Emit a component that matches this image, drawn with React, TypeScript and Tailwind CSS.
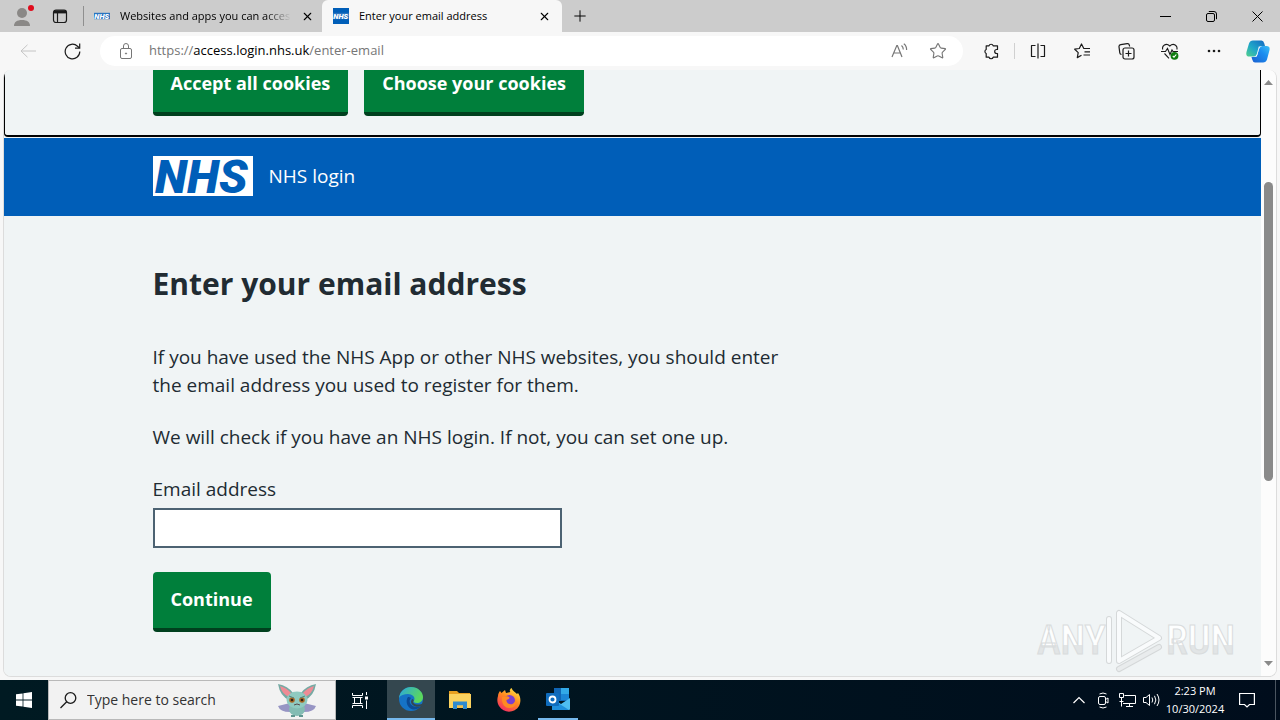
import type { ReactNode } from "react";
import { LuStar, LuX, LuPlus } from "react-icons/lu";
import clsx from "clsx";

type IconButtonProps = {
  label: string;
  className?: string;
  children: ReactNode;
};

const IconButton = ({ label, className, children }: IconButtonProps) => (
  <button
    aria-label={label}
    className={clsx("flex items-center justify-center shrink-0", className)}
  >
    {children}
  </button>
);

type NhsLogoProps = {
  className?: string;
  inverted?: boolean;
};

const NhsLogo = ({ className, inverted }: NhsLogoProps) => (
  <svg
    viewBox="0 0 100 40"
    className={clsx("overflow-visible", className)}
    role="img"
    aria-label="NHS"
  >
    <rect width="100" height="40" fill={inverted ? "#2a74bf" : "#fff"} />
    <text
      x="2"
      y="37"
      fontFamily="Roboto, sans-serif"
      fontWeight="900"
      fontStyle="italic"
      fontSize="47"
      fill={inverted ? "#fff" : "#005eb8"}
    >
      NHS
    </text>
  </svg>
);

const ProfileIcon = () => (
  <svg width="24" height="24" viewBox="0 0 24 24">
    <circle cx="12" cy="9" r="5" fill="#8a8886" />
    <path d="M4 22c0-4 3-6 8-6s8 2 8 6z" fill="#8a8886" />
    <circle cx="21" cy="4" r="3" fill="#e00b1c" />
  </svg>
);

const WorkspacesIcon = () => (
  <svg width="16" height="16" viewBox="0 0 16 16" fill="none" stroke="#1b1b1b">
    <rect x="1.5" y="2" width="13" height="12.5" rx="2.5" strokeWidth="1.2" />
    <path d="M2 3.8h12" strokeWidth="3.2" />
    <path d="M5.5 4v10" strokeWidth="1.2" />
  </svg>
);

const TabStrip = () => (
  <div className="flex items-end h-8 shrink-0 bg-[#cccccc] text-[11px] text-black">
    <div className="flex items-center h-full flex-1 min-w-0">
      <IconButton label="Profile" className="w-11 h-full">
        <ProfileIcon />
      </IconButton>
      <IconButton label="Workspaces" className="w-8 h-full">
        <WorkspacesIcon />
      </IconButton>
      <div className="w-px h-5 ml-[7px] bg-[#8f8f8f]" />
      <div className="flex items-center w-[238px] h-full shrink-0 pl-[10px] pr-2 gap-[10px]">
        <NhsLogo inverted className="w-4 h-2" />
        <span className="flex-1 overflow-hidden whitespace-nowrap [mask-image:linear-gradient(to_right,black_85%,transparent)]">
          Websites and apps you can acces
        </span>
        <IconButton label="Close tab">
          <LuX size={13} />
        </IconButton>
      </div>
      <div className="flex items-center w-60 h-full shrink-0 px-[11px] gap-[10px] rounded-t-md bg-[#f7f7f7]">
        <span className="flex items-center w-4 h-4 bg-[#005eb8]">
          <NhsLogo inverted className="w-4 h-2" />
        </span>
        <span className="flex-1 whitespace-nowrap">Enter your email address</span>
        <IconButton label="Close tab">
          <LuX size={13} />
        </IconButton>
      </div>
      <IconButton label="New tab" className="w-9 h-full">
        <LuPlus size={18} strokeWidth={1.3} />
      </IconButton>
    </div>
    <div className="flex h-full">
      <IconButton label="Minimize" className="w-[46px]">
        <svg width="11" height="11" stroke="#000" fill="none">
          <path d="M0 5.5h11" />
        </svg>
      </IconButton>
      <IconButton label="Restore" className="w-[46px]">
        <svg width="11" height="11" stroke="#000" fill="none">
          <rect x=".5" y="2.5" width="8" height="8" rx="1.5" />
          <path d="M2.8.5H8a2.5 2.5 0 0 1 2.5 2.5v5.2" />
        </svg>
      </IconButton>
      <IconButton label="Close" className="w-[46px]">
        <svg width="11" height="11" stroke="#000" fill="none">
          <path d="M.5.5l10 10M10.5.5l-10 10" />
        </svg>
      </IconButton>
    </div>
  </div>
);

const Toolbar = () => (
  <div className="flex items-center h-[38px] shrink-0 bg-[#f7f7f7]">
    <IconButton label="Back" className="w-14 text-[#c4c4c4]">
      <svg width="16" height="14" stroke="currentColor" fill="none">
        <path d="M16 7H1M7.5.8L1 7l6.5 6.2" />
      </svg>
    </IconButton>
    <IconButton label="Refresh" className="w-8">
      <svg width="17" height="17" viewBox="0 0 17 17" stroke="#1b1b1b" fill="none" strokeWidth="1.2">
        <path d="M15.8 8.5A7.3 7.3 0 1 1 13.5 3.2L15.5 5" />
        <path d="M15.7.5v4.700h-4.700" />
      </svg>
    </IconButton>
    <div className="flex items-center flex-1 h-[30px] ml-3 pl-[18px] pr-4 rounded-full bg-white">
      <svg width="16" height="18" viewBox="0 0 16 18" stroke="#767676" fill="none" aria-hidden="true">
        <rect x="2.5" y="6.500" width="11" height="10" rx="1.5" />
        <path d="M5.500 6.500V4a2.500 2.500 0 0 1 5 0v2.500" />
        <circle cx="8" cy="11.500" r=".6" fill="#767676" />
      </svg>
      <div className="flex-1 ml-[15px] text-[13px] text-[#767676]">
        https://<span className="text-black">access.login.nhs.uk</span>/enter-email
      </div>
      <IconButton label="Read aloud" className="w-10 text-[#767676]">
        <svg width="17" height="16" viewBox="0 0 17 16" stroke="currentColor" fill="none" strokeWidth="1.2">
          <path d="M1 14L5.800 2.500h.6L11 14M2.700 10h6.600" />
          <path d="M10.500 2.500q1.800 1.400 1.800 4M12.800.8q3 2.200 2.800 6.200" />
        </svg>
      </IconButton>
      <IconButton label="Add to favorites" className="w-[38px] -mr-[10px] text-[#767676]">
        <LuStar size={18} strokeWidth={1.5} />
      </IconButton>
    </div>
    <IconButton label="Extensions" className="w-11 ml-[6px]">
      <svg width="17" height="17" viewBox="0 0 17 17" stroke="#1b1b1b" fill="none" strokeWidth="1.2">
        <path d="M6 2.800a2.200 2.200 0 0 1 4.200 0H14.500v3.700h-.8a2 2 0 0 0 0 4h.8v3.700h-4.300a2.200 2.200 0 0 1-4.200 0H3.200v-3.700a2.200 2.200 0 0 1 0-4V2.800z" strokeLinejoin="round" />
      </svg>
    </IconButton>
    <div className="w-px h-4 mx-px bg-[#d0d0d0]" />
    <IconButton label="Split screen" className="w-11">
      <svg width="16" height="16" stroke="#1b1b1b" fill="none" strokeWidth="1.2">
        <path d="M8 .5v15M5.500 2.500h-4v11h4M10.500 2.500h4v11h-4" strokeLinejoin="round" />
      </svg>
    </IconButton>
    <IconButton label="Favorites" className="w-11">
      <svg width="17" height="16" viewBox="0 0 17 16" stroke="#1b1b1b" fill="none" strokeWidth="1.2" strokeLinejoin="round">
        <path d="M14.500 5.500H9.800L7.500 1 5.300 5.500.7 6.200l3.500 3.400-.9 5 4.200-2.300" />
        <path d="M10.500 5.500H16M10.500 8.800H16M9.500 12H16" />
      </svg>
    </IconButton>
    <IconButton label="Collections" className="w-11">
      <svg width="17" height="17" viewBox="0 0 17 17" stroke="#1b1b1b" fill="none" strokeWidth="1.2">
        <path d="M3.500 11.500a2 2 0 0 1-1.700-1.700L1 3.800A2 2 0 0 1 2.700 1.600l6.500-.9a2 2 0 0 1 2.200 1.600l.2 1.200" />
        <rect x="5" y="5" width="11" height="11" rx="2" />
        <path d="M10.500 7.500v6M7.500 10.500h6" />
      </svg>
    </IconButton>
    <IconButton label="Browser essentials" className="w-11">
      <svg width="18" height="17" viewBox="0 0 18 17" stroke="#1b1b1b" fill="none" strokeWidth="1.1">
        <path d="M1.800 6.500C.5 2.800 5-.7 8.800 3c3.800-3.700 8.200-.2 7 3.500M3.500 10.500l4.500 4.800" />
        <path d="M0 8.500h4.500l2-3 2.500 6 2-4.500 1 1.500H17" />
        <circle cx="13.500" cy="12.800" r="3.900" fill="#107c10" stroke="none" />
        <path d="M11.800 13l1.200 1.200 2.300-2.700" stroke="#fff" />
      </svg>
    </IconButton>
    <IconButton label="Settings and more" className="w-11">
      <svg width="14" height="4" fill="#1b1b1b">
        <circle cx="2" cy="2" r="1.300" />
        <circle cx="7" cy="2" r="1.300" />
        <circle cx="12" cy="2" r="1.300" />
      </svg>
    </IconButton>
    <IconButton label="Copilot" className="w-11">
      <svg width="24" height="23" viewBox="0 0 24 23">
        <defs>
          <linearGradient id="copilotLeft" x1="0" y1="1" x2="1" y2="0">
            <stop offset="0" stopColor="#52d08c" />
            <stop offset=".45" stopColor="#1fa7c9" />
            <stop offset="1" stopColor="#1467c2" />
          </linearGradient>
          <linearGradient id="copilotRight" x1="0" y1="1" x2="1" y2="0">
            <stop offset="0" stopColor="#1b5fd0" />
            <stop offset=".6" stopColor="#1a8df0" />
            <stop offset="1" stopColor="#3cc0f5" />
          </linearGradient>
        </defs>
        <path d="M7 .5h8.500q2 0 2.800 3l.7 2.500h-3q-2.300 0-3 2.500l-1.500 5q-.9 3-3.500 3H3.500Q-.8 16.500.6 11.500L3 3.500Q4 .5 7 .5z" fill="url(#copilotLeft)" />
        <path d="M17 22.500H9q-2 0-2.800-3l-.7-2.500H8.500q2.300 0 3-2.500l1.500-5.500q.9-3 3.500-3h4q4 0 2.900 4.500L21 19.500q-1 3-4 3z" fill="url(#copilotRight)" />
        <path d="M12.800 6.500h3.200q-2.300 0-3 2.500l-2.200 7.500H8.200q2-.5 2.600-2.500z" fill="#f4fbff" />
      </svg>
    </IconButton>
  </div>
);

const GreenButton = ({ className, children }: { className?: string; children: ReactNode }) => (
  <button
    className={clsx(
      "px-[18px] rounded bg-[#007f3b] border-b-4 border-[#00401e] text-white text-lg leading-[26px] font-bold",
      className
    )}
  >
    {children}
  </button>
);

const Page = () => (
  <div className="flex-1 min-w-0 overflow-hidden bg-[#f0f4f5] text-[#212b32] text-[19px] leading-7">
    <div className="border-b-2 border-x border-black rounded-b-sm mb-px pb-[19px]">
      <div className="flex gap-4 max-w-[960px] mx-auto">
        <GreenButton className="rounded-t-none pb-4">Accept all cookies</GreenButton>
        <GreenButton className="rounded-t-none pb-4">Choose your cookies</GreenButton>
      </div>
    </div>
    <header className="bg-[#005eb8] pt-[18px] pb-5">
      <a href="#" className="flex items-center gap-4 max-w-[960px] mx-auto text-white">
        <NhsLogo className="w-[100px] h-10" />
        <span>NHS login</span>
      </a>
    </header>
    <main className="max-w-[960px] mx-auto pt-12">
      <h1 className="text-[30px] leading-10 font-bold mb-[39px]">Enter your email address</h1>
      <p className="mb-6 max-w-[640px]">
        If you have used the NHS App or other NHS websites, you should enter the email address you
        used to register for them.
      </p>
      <p className="mb-6">
        We will check if you have an NHS login. If not, you can set one up.
      </p>
      <label htmlFor="email" className="block mb-[5px]">
        Email address
      </label>
      <input
        id="email"
        type="email"
        className="block w-full max-w-[409px] h-10 mb-6 px-1 bg-white border-2 border-[#4c6272]"
      />
      <GreenButton className="pt-[14px] pb-4">Continue</GreenButton>
    </main>
  </div>
);

const ScrollBar = () => (
  <div className="flex flex-col items-center w-[15px] shrink-0 bg-[#fcfcfc] py-[10px]" aria-hidden="true">
    <svg width="9" height="5" fill="#8a8a8a">
      <path d="M0 5l4.500-5L9 5z" />
    </svg>
    <div className="flex-[97]" />
    <div className="flex-[300] w-[9px] rounded-full bg-[#8a8a8a]" />
    <div className="flex-[180]" />
    <svg width="9" height="5" fill="#8a8a8a">
      <path d="M0 0l4.500 5L9 0z" />
    </svg>
  </div>
);

const Watermark = () => (
  <svg
    width="200"
    height="66"
    viewBox="0 0 200 66"
    className="absolute right-[41px] bottom-[3px] pointer-events-none"
    aria-hidden="true"
  >
    <defs>
      <linearGradient id="mark" x1="0" y1="0" x2="0" y2="1">
        <stop offset=".6" stopColor="#fdfefe" />
        <stop offset=".6" stopColor="#e2e5e6" />
      </linearGradient>
    </defs>
    <g
      fill="url(#mark)"
      stroke="#d9dcdd"
      strokeWidth="1"
      fontFamily="Roboto Condensed, Liberation Sans Narrow, sans-serif"
      fontSize="40"
      fontWeight="500"
    >
      <text x="2" y="47">ANY</text>
      <text x="131" y="47">RUN</text>
    </g>
    <g fill="none" strokeLinejoin="round" strokeLinecap="round">
      <path d="M74 12v42M84 6v48l40-23zM84 62l40-22" stroke="#d5d8d9" strokeWidth="6" />
      <path d="M74 12v42M84 6v48l40-23z" stroke="#f9fbfc" strokeWidth="4" />
      <path d="M84 62l40-22" stroke="#e9eced" strokeWidth="4" />
    </g>
  </svg>
);

const SearchHighlight = () => (
  <svg width="40" height="34" viewBox="0 0 40 34" aria-hidden="true">
    <path d="M13 20L1 23q2 6 12 6zM27 20l12 3q-2 6-12 6z" fill="#9795c4" />
    <path d="M12 17Q3 13 1 1q10 2 15 9zM28 17Q37 13 39 1 29 3 24 10z" fill="#76aaa4" />
    <path d="M12 14Q5 11 3 3q7 2 11 7zM28 14Q35 11 37 3q-7 2-11 7z" fill="#ee8b95" />
    <ellipse cx="20" cy="26" rx="8" ry="7" fill="#83bcb3" />
    <ellipse cx="20" cy="17" rx="10.500" ry="8.500" fill="#8fcac0" />
    <circle cx="15" cy="17" r="2.800" fill="#a96824" />
    <circle cx="25" cy="17" r="2.800" fill="#a96824" />
    <circle cx="15" cy="17" r="1.300" fill="#2c2119" />
    <circle cx="25" cy="17" r="1.300" fill="#2c2119" />
    <path d="M12 13l5 2M28 13l-5 2" stroke="#55867f" />
    <path d="M17 22q3-2 6 0" stroke="#5a4a4a" fill="none" />
    <path d="M14 33h4M22 33h4" stroke="#5f958f" strokeWidth="2" />
  </svg>
);

const EdgeIcon = () => (
  <svg width="24" height="24" viewBox="0 0 24 24">
    <defs>
      <linearGradient id="edgeTop" x1="0" y1="0" x2="1" y2=".4">
        <stop offset="0" stopColor="#2aa7e0" />
        <stop offset="1" stopColor="#5bd85c" />
      </linearGradient>
    </defs>
    <circle cx="12" cy="12" r="12" fill="#1673c6" />
    <path d="M0 11C1 4 6 0 12 0c7 0 12 5 12 10 0 4-3 6-6 6-3 0-4-1-3-2.500C17 10 13 7 9 7c-4 0-7.500 1-9 4z" fill="url(#edgeTop)" />
    <path d="M9 10c-3 4-1 11 5 12.500 3 .5 6-1 8.500-3.500-4 2-9 1-11-2-1.500-2.500-1-4.500.5-6-1-1-2-1-3-1z" fill="#0c4a94" />
    <path d="M14.500 14c-1.200 1.500.5 3.500 4.500 3.500 2 0 4-.5 5-1.500l-1.500 3c-4 2-10 0-10.500-4 0-1.500.7-2.500 1.500-3 1 .5 1.500 1.200 1 2z" fill="#34474f" />
  </svg>
);

const ExplorerIcon = () => (
  <svg width="22" height="20" viewBox="0 0 22 20">
    <path d="M0 1h8l2 2h11v5H0z" fill="#e8a020" />
    <path d="M0 4h22v14H0z" fill="#fbd25f" />
    <path d="M4 11.500h14V19h-4v-3.500H8V19H4z" fill="#2e8ad0" />
    <path d="M8 15.500h6V18H8z" fill="#f3c04f" />
  </svg>
);

const FirefoxIcon = () => (
  <svg width="24" height="24" viewBox="0 0 24 24">
    <defs>
      <linearGradient id="fox" x1=".8" y1="0" x2=".2" y2="1">
        <stop offset="0" stopColor="#ffe545" />
        <stop offset=".45" stopColor="#ff8a1f" />
        <stop offset="1" stopColor="#f52667" />
      </linearGradient>
    </defs>
    <path d="M1 8c0-2 1-4 2-5l1.500 2L8 2l1 3c2-.5 4-1 4.500-1C12 3 13 1 14.500 0c1 3 4 4 5.500 6l1-1c3 4 3 9 1 13-4 7-15 8-20 0-2-3-2-7-1-10z" fill="url(#fox)" />
    <circle cx="12.500" cy="12.500" r="5.500" fill="#7a3fd0" />
    <path d="M5 9c3-1 6-1 7 0 1.500 1-.5 2.500-2.500 3-.5 3 3 5 6 4 2-1 3-3 3-5 2 5-1 9-6 9s-8-4-7.500-11z" fill="#ff8a22" />
  </svg>
);

const OutlookIcon = () => (
  <svg width="25" height="24" viewBox="0 0 25 24">
    <path d="M8 1h15v13H8z" fill="#1066b5" />
    <path d="M15 1h8v6h-8z" fill="#32a9e7" />
    <path d="M15 7h8v6h-8z" fill="#1b86d6" />
    <path d="M6 11l9 6 9-6v11q0 1-1 1H7q-1 0-1-1z" fill="#4fbdf0" />
    <path d="M6 12l17 11H7q-1 0-1-1z" fill="#1f8fdc" />
    <rect y="6" width="13" height="13" rx="1" fill="#0f6cbd" />
    <circle cx="6.500" cy="12.500" r="3" fill="none" stroke="#fff" strokeWidth="1.800" />
  </svg>
);

const Taskbar = () => (
  <footer className="flex h-10 shrink-0 bg-linear-to-r from-[#001a22] to-[#000d1c] text-white">
    <IconButton label="Start" className="w-12">
      <svg width="16" height="16" fill="#fff">
        <path d="M0 2.300L6.600 1.400V7.600H0zM7.400 1.300L16 0v7.600H7.400zM0 8.400h6.600v6.200L0 13.700zM7.400 8.400H16V16l-8.600-1.300z" />
      </svg>
    </IconButton>
    <label className="flex items-center w-72 pl-[11px] pr-[18px] bg-[#f2f2f2] border border-[#b9b9b9]">
      <svg width="17" height="17" viewBox="0 0 17 17" stroke="#1b1b1b" fill="none" strokeWidth="1.300" aria-hidden="true">
        <circle cx="10.500" cy="6" r="5.300" />
        <path d="M6.700 9.800L.5 16" />
      </svg>
      <input
        type="text"
        aria-label="Search"
        placeholder="Type here to search"
        className="flex-1 min-w-0 ml-[10px] text-sm placeholder:text-[#333333] bg-transparent"
      />
      <SearchHighlight />
    </label>
    <IconButton label="Task view" className="w-12 mr-[3px]">
      <svg width="17" height="17" viewBox="0 0 17 17" stroke="#fff" fill="none">
        <path d="M.5 1v2.500h10V1M.5 16v-2.500h10V16M2.500 5.500v6M8.500 5.500v6M.5 5.500h10M.5 11.500h10M14.500 0v3M14.500 8.500V17" />
        <path d="M13 4.500h3v3h-3z" fill="#fff" stroke="none" />
      </svg>
    </IconButton>
    <div className="flex gap-px">
      <IconButton label="Microsoft Edge" className="w-12 bg-[#34474f] border-b-2 border-[#76b9ed]">
        <EdgeIcon />
      </IconButton>
      <IconButton label="File Explorer" className="w-12">
        <ExplorerIcon />
      </IconButton>
      <IconButton label="Firefox" className="w-12">
        <FirefoxIcon />
      </IconButton>
      <IconButton label="Outlook" className="w-10 mx-1 border-b-2 border-[#76b9ed]">
        <OutlookIcon />
      </IconButton>
    </div>
    <div className="flex flex-1 justify-end">
      <IconButton label="Show hidden icons" className="w-6">
        <svg width="12" height="8" stroke="#fff" fill="none" strokeWidth="1.200">
          <path d="M.5 7L6 1.500 11.500 7" />
        </svg>
      </IconButton>
      <IconButton label="Camera" className="w-6">
        <svg width="13" height="17" viewBox="0 0 13 17" stroke="#fff" fill="none">
          <rect x="1.500" y="4.500" width="7" height="8" rx="1.500" />
          <path d="M8.500 7.500l2.500-1.500v5l-2.500-1.500M2.500 2Q6 0 9.500 2M2.500 15Q6 17 9.500 15" />
        </svg>
      </IconButton>
      <IconButton label="Network" className="w-6">
        <svg width="17" height="14" viewBox="0 0 17 14" stroke="#fff" fill="none">
          <path d="M5.500 2.500h11v8H4M10.500 10.500v3M7 13.500h7" />
          <path d="M.5.5h4v4h-4zM2.500 4.500v9M.5 8.500h4" />
        </svg>
      </IconButton>
      <IconButton label="Volume" className="w-6">
        <svg width="17" height="14" viewBox="0 0 17 14" stroke="#fff" fill="none">
          <path d="M.5 4.500h2.500l3.500-3v11l-3.500-3H.5zM9 4.500q1.500 2.500 0 5M11.500 2.800q2.700 4.200 0 8.400M14 1q4 6 0 12" />
        </svg>
      </IconButton>
      <button className="w-16 text-[11px] leading-[18px] text-center">
        2:23 PM
        <br />
        10/30/2024
      </button>
      <IconButton label="Notifications" className="w-10">
        <svg width="16" height="16" viewBox="0 0 16 16" stroke="#fff" fill="none" strokeWidth="1.200">
          <path d="M.6 1.500h14.800v11H10.500L8 15l-2.500-2.500H.6z" />
        </svg>
      </IconButton>
      <div className="w-[9px] border-r border-[#4a5560] mr-1" />
    </div>
  </footer>
);

export default function App() {
  return (
    <div className="flex flex-col h-screen overflow-hidden bg-[#f7f7f7] font-['Open_Sans','Noto_Sans',sans-serif]">
      <TabStrip />
      <Toolbar />
      <div className="relative flex flex-1 min-h-0 mx-[3px] mb-[3px] border border-t-0 border-[#dcdcdc] rounded-lg overflow-hidden">
        <Page />
        <ScrollBar />
        <Watermark />
      </div>
      <Taskbar />
    </div>
  );
}
